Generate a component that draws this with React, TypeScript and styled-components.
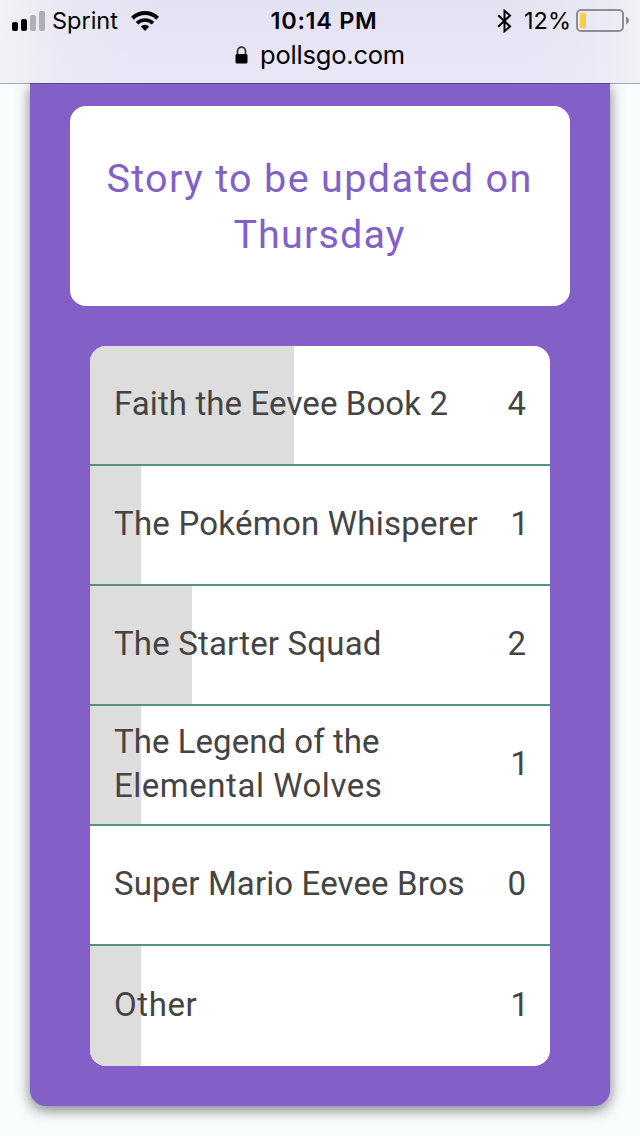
import React from "react";
import styled, { createGlobalStyle } from "styled-components";

const GlobalStyle = createGlobalStyle`
  * { box-sizing: border-box; }
  html, body { margin: 0; padding: 0; }
  body {
    background: #f8fcfd;
    -webkit-font-smoothing: antialiased;
  }
`;

const Screen = styled.div`
  display: flex;
  flex-direction: column;
  width: 640px;
  height: 1136px;
  overflow: hidden;
  background: #f8fcfd;
`;

const BrowserHeader = styled.header`
  position: relative;
  z-index: 1;
  flex: none;
  height: 84px;
  border-bottom: 1px solid rgba(0, 0, 0, 0.32);
  background:
    linear-gradient(90deg, #f1f2f6 0, rgba(236, 235, 245, 0.6) 60px, rgba(232, 230, 246, 0) 150px, rgba(232, 230, 246, 0) 510px, rgba(236, 235, 245, 0.6) 590px, #f0f0f5 640px),
    linear-gradient(180deg, #e3e2f2 0, #e9e6f7 70px);
  background-clip: padding-box;
  color: #000;
  font-family: Inter, "Liberation Sans", sans-serif;
`;

const StatusBar = styled.div`
  display: grid;
  grid-template-columns: 1fr auto 1fr;
  align-items: center;
  height: 40px;
  padding: 0 11px 0 12px;
`;

const StatusGroup = styled.div<{ $end?: boolean }>`
  display: flex;
  align-items: center;
  justify-content: ${(p) => (p.$end ? "flex-end" : "flex-start")};
`;

const StatusText = styled.span<{ $bold?: boolean; $spacing?: number }>`
  padding-top: 1px;
  padding-left: ${(p) => (p.$bold ? 7 : 0)}px;
  font-size: 23.5px;
  line-height: 40px;
  font-weight: ${(p) => (p.$bold ? 600 : 400)};
  letter-spacing: ${(p) => p.$spacing ?? 0}px;
  white-space: nowrap;
`;

const SignalIcon = styled.svg`
  margin-right: 7px;
`;

const WifiIcon = styled.svg`
  margin-left: 13px;
`;

const BluetoothIcon = styled.svg`
  margin-right: 12px;
`;

const BatteryIcon = styled.svg`
  margin-left: 5px;
`;

const AddressBar = styled.div`
  display: flex;
  align-items: center;
  justify-content: center;
  gap: 12px;
  height: 30px;
`;

const Address = styled.span`
  font-size: 25.5px;
  line-height: 30px;
  letter-spacing: -0.2px;
`;

const PollCard = styled.main`
  flex: none;
  display: flex;
  flex-direction: column;
  align-items: center;
  gap: 40px;
  width: 580px;
  height: 1023px;
  margin: -1px auto 0;
  padding-top: 23px;
  border-radius: 0 0 16px 16px;
  background: #8260c8;
  box-shadow: 0 4px 14px rgba(0, 0, 0, 0.5);
`;

const TitleBox = styled.section`
  display: flex;
  align-items: center;
  justify-content: center;
  width: 500px;
  height: 200px;
  padding: 2px 1px 0 0;
  border-radius: 16px;
  background: #fff;
`;

const Title = styled.h1`
  margin: 0;
  color: #8260c8;
  font: 400 39.5px/56px Roboto, "Noto Sans", sans-serif;
  text-align: center;
`;

const TextLine = styled.span<{ $spacing: number }>`
  display: block;
  letter-spacing: ${(p) => p.$spacing}px;
  white-space: nowrap;
`;

const OptionList = styled.ul`
  width: 460px;
  margin: 0;
  padding: 0;
  overflow: hidden;
  border-radius: 16px;
  background: #fff;
  list-style: none;
`;

const OptionRow = styled.li<{ $share: number }>`
  display: flex;
  align-items: center;
  justify-content: space-between;
  height: 120px;
  padding: 0 24px 2px;
  background: linear-gradient(#ddd, #ddd) 0 0 / ${(p) => p.$share}px 100% no-repeat;
  color: #444;
  font: 400 33px/44px Roboto, "Noto Sans", sans-serif;

  &:not(:last-child) {
    border-bottom: 2px solid #55918a;
  }
`;

const Votes = styled.span<{ $narrow: boolean }>`
  margin-right: ${(p) => (p.$narrow ? -3 : 0)}px;
  text-align: right;
`;

interface Line {
  text: string;
  spacing: number;
}

const titleLines: Line[] = [
  { text: "Story to be updated on", spacing: 1.35 },
  { text: "Thursday", spacing: 1.15 },
];

const options: { lines: Line[]; votes: number; share: number }[] = [
  { lines: [{ text: "Faith the Eevee Book 2", spacing: 0.1 }], votes: 4, share: 204 },
  { lines: [{ text: "The Pokémon Whisperer", spacing: 0.23 }], votes: 1, share: 51 },
  { lines: [{ text: "The Starter Squad", spacing: 0.17 }], votes: 2, share: 102 },
  {
    lines: [
      { text: "The Legend of the", spacing: 0.04 },
      { text: "Elemental Wolves", spacing: 0.53 },
    ],
    votes: 1,
    share: 51,
  },
  { lines: [{ text: "Super Mario Eevee Bros", spacing: 0.12 }], votes: 0, share: 0 },
  { lines: [{ text: "Other", spacing: 0.6 }], votes: 1, share: 51 },
];

export default function App() {
  return (
    <>
      <GlobalStyle />
      <Screen>
        <BrowserHeader>
          <StatusBar>
            <StatusGroup>
              <SignalIcon width="33" height="20" viewBox="0 0 33 20">
                <rect x="0" y="11" width="6" height="9" rx="2" />
                <rect x="9" y="8" width="6" height="12" rx="2" />
                <rect x="18" y="4" width="6" height="16" rx="2" fill="#aeaeb6" />
                <rect x="27" y="0" width="6" height="20" rx="2" fill="#aeaeb6" />
              </SignalIcon>
              <StatusText>Sprint</StatusText>
              <WifiIcon width="28" height="20" viewBox="0 0 28 20">
                <g fill="none" stroke="#000" strokeWidth="4">
                  <path d="M1.400 7.200a18 18 0 0 1 25.200 0" />
                  <path d="M6 12.200a11.500 11.500 0 0 1 16 0" strokeWidth="3.600" />
                </g>
                <path d="M14 20l-4.300-4.400a6.200 6.200 0 0 1 8.600 0z" />
              </WifiIcon>
            </StatusGroup>
            <StatusText $bold $spacing={0.7}>10:14 PM</StatusText>
            <StatusGroup $end>
              <BluetoothIcon width="15" height="24" viewBox="0 0 15 24">
                <path
                  d="M1.200 6.200L13 17.400 7.500 22.200V1.800L13 6.600 1.200 17.800"
                  fill="none"
                  stroke="#000"
                  strokeWidth="2"
                />
              </BluetoothIcon>
              <StatusText>12%</StatusText>
              <BatteryIcon width="53" height="23" viewBox="0 0 53 23">
                <rect x="1" y="1" width="46" height="21" rx="4" fill="none" stroke="#8e8d96" strokeWidth="2" />
                <rect x="4" y="4" width="6" height="15" rx="1" fill="#f9ce45" />
                <path d="M50 7.500c4 1.500 4 6.500 0 8z" fill="#8e8d96" />
              </BatteryIcon>
            </StatusGroup>
          </StatusBar>
          <AddressBar>
            <svg width="13" height="18" viewBox="0 0 13 18">
              <path d="M2.500 9V5.200a4 4 0 0 1 8 0V9" fill="none" stroke="#333" strokeWidth="1.700" />
              <rect x="0.500" y="8" width="12" height="9.500" rx="1.500" />
            </svg>
            <Address>pollsgo.com</Address>
          </AddressBar>
        </BrowserHeader>
        <PollCard>
          <TitleBox>
            <Title>
              {titleLines.map((line) => (
                <TextLine key={line.text} $spacing={line.spacing}>
                  {line.text}
                </TextLine>
              ))}
            </Title>
          </TitleBox>
          <OptionList>
            {options.map((option) => (
              <OptionRow key={option.lines[0].text} $share={option.share}>
                <div>
                  {option.lines.map((line) => (
                    <TextLine key={line.text} $spacing={line.spacing}>
                      {line.text}
                    </TextLine>
                  ))}
                </div>
                <Votes $narrow={option.votes === 1}>{option.votes}</Votes>
              </OptionRow>
            ))}
          </OptionList>
        </PollCard>
      </Screen>
    </>
  );
}
